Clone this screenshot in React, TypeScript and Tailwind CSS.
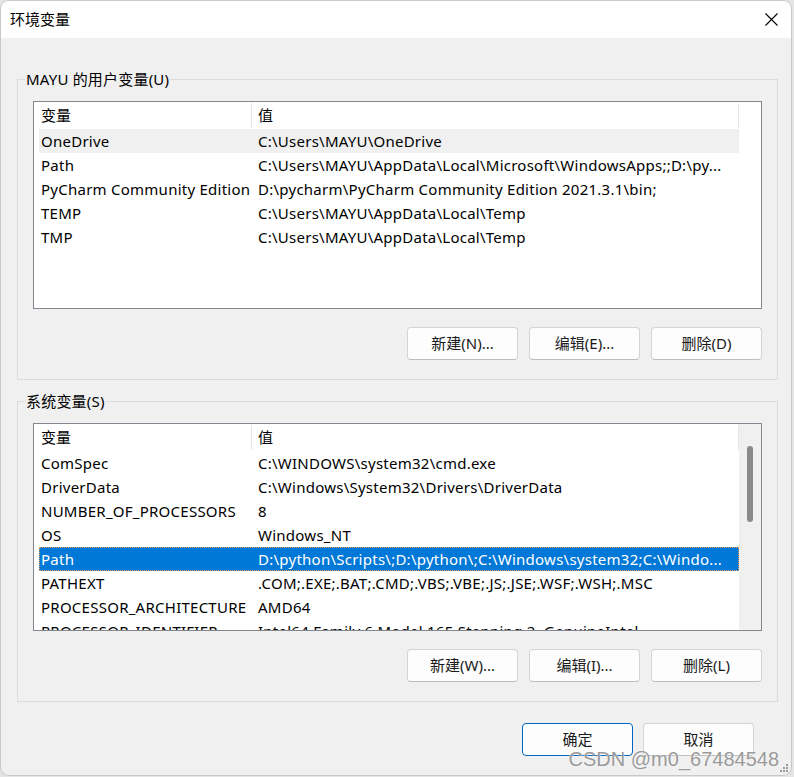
import React from "react";

interface EnvVar {
  name: string;
  value: string;
}

const userVars: EnvVar[] = [
  { name: "OneDrive", value: "C:\\Users\\MAYU\\OneDrive" },
  { name: "Path", value: "C:\\Users\\MAYU\\AppData\\Local\\Microsoft\\WindowsApps;;D:\\py..." },
  { name: "PyCharm Community Edition", value: "D:\\pycharm\\PyCharm Community Edition 2021.3.1\\bin;" },
  { name: "TEMP", value: "C:\\Users\\MAYU\\AppData\\Local\\Temp" },
  { name: "TMP", value: "C:\\Users\\MAYU\\AppData\\Local\\Temp" },
];

const systemVars: EnvVar[] = [
  { name: "ComSpec", value: "C:\\WINDOWS\\system32\\cmd.exe" },
  { name: "DriverData", value: "C:\\Windows\\System32\\Drivers\\DriverData" },
  { name: "NUMBER_OF_PROCESSORS", value: "8" },
  { name: "OS", value: "Windows_NT" },
  { name: "Path", value: "D:\\python\\Scripts\\;D:\\python\\;C:\\Windows\\system32;C:\\Windo..." },
  { name: "PATHEXT", value: ".COM;.EXE;.BAT;.CMD;.VBS;.VBE;.JS;.JSE;.WSF;.WSH;.MSC" },
  { name: "PROCESSOR_ARCHITECTURE", value: "AMD64" },
  { name: "PROCESSOR_IDENTIFIER", value: "Intel64 Family 6 Model 165 Stepping 2, GenuineIntel" },
];

function ListHeader() {
  return (
    <div className="h-[27px] flex items-center shrink-0">
      <div className="w-[217px] pl-[7px] leading-none">变量</div>
      <div className="w-px h-[25px] bg-[#e5e5e5]" />
      <div className="w-[486px] pl-[6px] leading-none">值</div>
      <div className="w-px h-[25px] bg-[#e5e5e5]" />
    </div>
  );
}

function VarRows({ rows, hovered, selected }: { rows: EnvVar[]; hovered?: number; selected?: number }) {
  return (
    <div className="pl-[5px] tracking-[0.25px]">
      {rows.map((row, i) => (
        <div
          key={row.name}
          className={
            i === selected
              ? "w-[700px] h-[24px] flex items-center whitespace-nowrap bg-[#0078d7] text-white outline-1 outline-dotted outline-[#e89a4a] -outline-offset-1"
              : i === hovered
              ? "w-[700px] h-[24px] flex items-center whitespace-nowrap bg-[#f0f0f0]"
              : "w-[700px] h-[24px] flex items-center whitespace-nowrap"
          }
        >
          <div className="w-[217px] pl-[2px] shrink-0 overflow-hidden">{row.name}</div>
          <div className="pl-[2px] overflow-hidden">{row.value}</div>
        </div>
      ))}
    </div>
  );
}

function DlgButton({ label, primary }: { label: string; primary?: boolean }) {
  return (
    <button
      className={
        primary
          ? "w-[111px] h-[33px] rounded-[4px] border border-[#0067c0] bg-[#fdfdfd] text-[15px] text-[#1a1a1a]"
          : "w-[111px] h-[33px] rounded-[4px] border border-[#d4d4d4] border-b-[#bdbdbd] bg-[#fdfdfd] text-[15px] text-[#1a1a1a]"
      }
    >
      {label}
    </button>
  );
}

function GroupBox({ title, children }: { title: string; children: React.ReactNode }) {
  return (
    <div className="relative w-[761px] border border-[#dcdcdc] pt-[21px] px-[15px] pb-[19px]">
      <span className="absolute left-[7px] top-[-11px] px-[1px] bg-[#f0f0f0] leading-[20px] tracking-[0.2px]">{title}</span>
      {children}
    </div>
  );
}

export default function App() {
  return (
    <div className="min-h-screen bg-[#e4e4e4] pt-[1px] pl-[1px] font-['Noto_Sans','Noto_Sans_CJK_SC',sans-serif] text-[15px] text-black">
      <div className="relative w-[790px] h-[774px] rounded-[8px] overflow-hidden bg-[#f0f0f0] flex flex-col shadow-[0_0_0_1px_#c8c8c8]">
        {/* title bar */}
        <div className="h-[37px] bg-white flex items-center justify-between pl-[9px] pr-[12px] shrink-0">
          <span className="leading-none">环境变量</span>
          <svg width="13" height="13" viewBox="0 0 13 13" className="mr-[1px]">
            <path d="M0.5 0.5 L12.5 12.5 M12.5 0.5 L0.5 12.5" stroke="#000" strokeWidth="1.1" />
          </svg>
        </div>

        <div className="pl-[16px] pt-[41px] flex flex-col">
          <GroupBox title="MAYU 的用户变量(U)">
            <div className="h-[208px] border border-[#828790] bg-white flex flex-col overflow-hidden">
              <ListHeader />
              <VarRows rows={userVars} hovered={0} />
            </div>
            <div className="mt-[18px] flex justify-end gap-[11px]">
              <DlgButton label="新建(N)..." />
              <DlgButton label="编辑(E)..." />
              <DlgButton label="删除(D)" />
            </div>
          </GroupBox>

          <div className="mt-[21px]">
            <GroupBox title="系统变量(S)">
              <div className="h-[208px] border border-[#828790] bg-white flex overflow-hidden">
                <div className="w-[705px] flex flex-col overflow-hidden">
                  <ListHeader />
                  <VarRows rows={systemVars} selected={4} />
                </div>
                <div className="w-[22px] bg-[#f0f0f0]">
                  <div className="ml-[8px] mt-[22px] w-[6px] h-[76px] rounded-full bg-[#8a8a8a]" />
                </div>
              </div>
              <div className="mt-[18px] flex justify-end gap-[11px]">
                <DlgButton label="新建(W)..." />
                <DlgButton label="编辑(I)..." />
                <DlgButton label="删除(L)" />
              </div>
            </GroupBox>
          </div>

          <div className="mt-[21px] flex justify-end gap-[10px] pr-[37px]">
            <DlgButton label="确定" primary />
            <DlgButton label="取消" />
          </div>
        </div>

        {/* watermark */}
        <span className="absolute right-[12px] bottom-[6px] font-['Liberation_Sans',sans-serif] text-[20px] leading-none text-[#9a9a9a] [text-shadow:0_0_2px_#ffffff]">
          CSDN @m0_67484548
        </span>

        {/* resize grip */}
        <svg width="10" height="10" viewBox="0 0 10 10" className="absolute right-[2px] bottom-[2px]">
          <rect x="7" y="1" width="2" height="2" fill="#9a9a9a" />
          <rect x="4" y="4" width="2" height="2" fill="#9a9a9a" />
          <rect x="7" y="4" width="2" height="2" fill="#9a9a9a" />
          <rect x="1" y="7" width="2" height="2" fill="#9a9a9a" />
          <rect x="4" y="7" width="2" height="2" fill="#9a9a9a" />
          <rect x="7" y="7" width="2" height="2" fill="#9a9a9a" />
        </svg>
      </div>
    </div>
  );
}
